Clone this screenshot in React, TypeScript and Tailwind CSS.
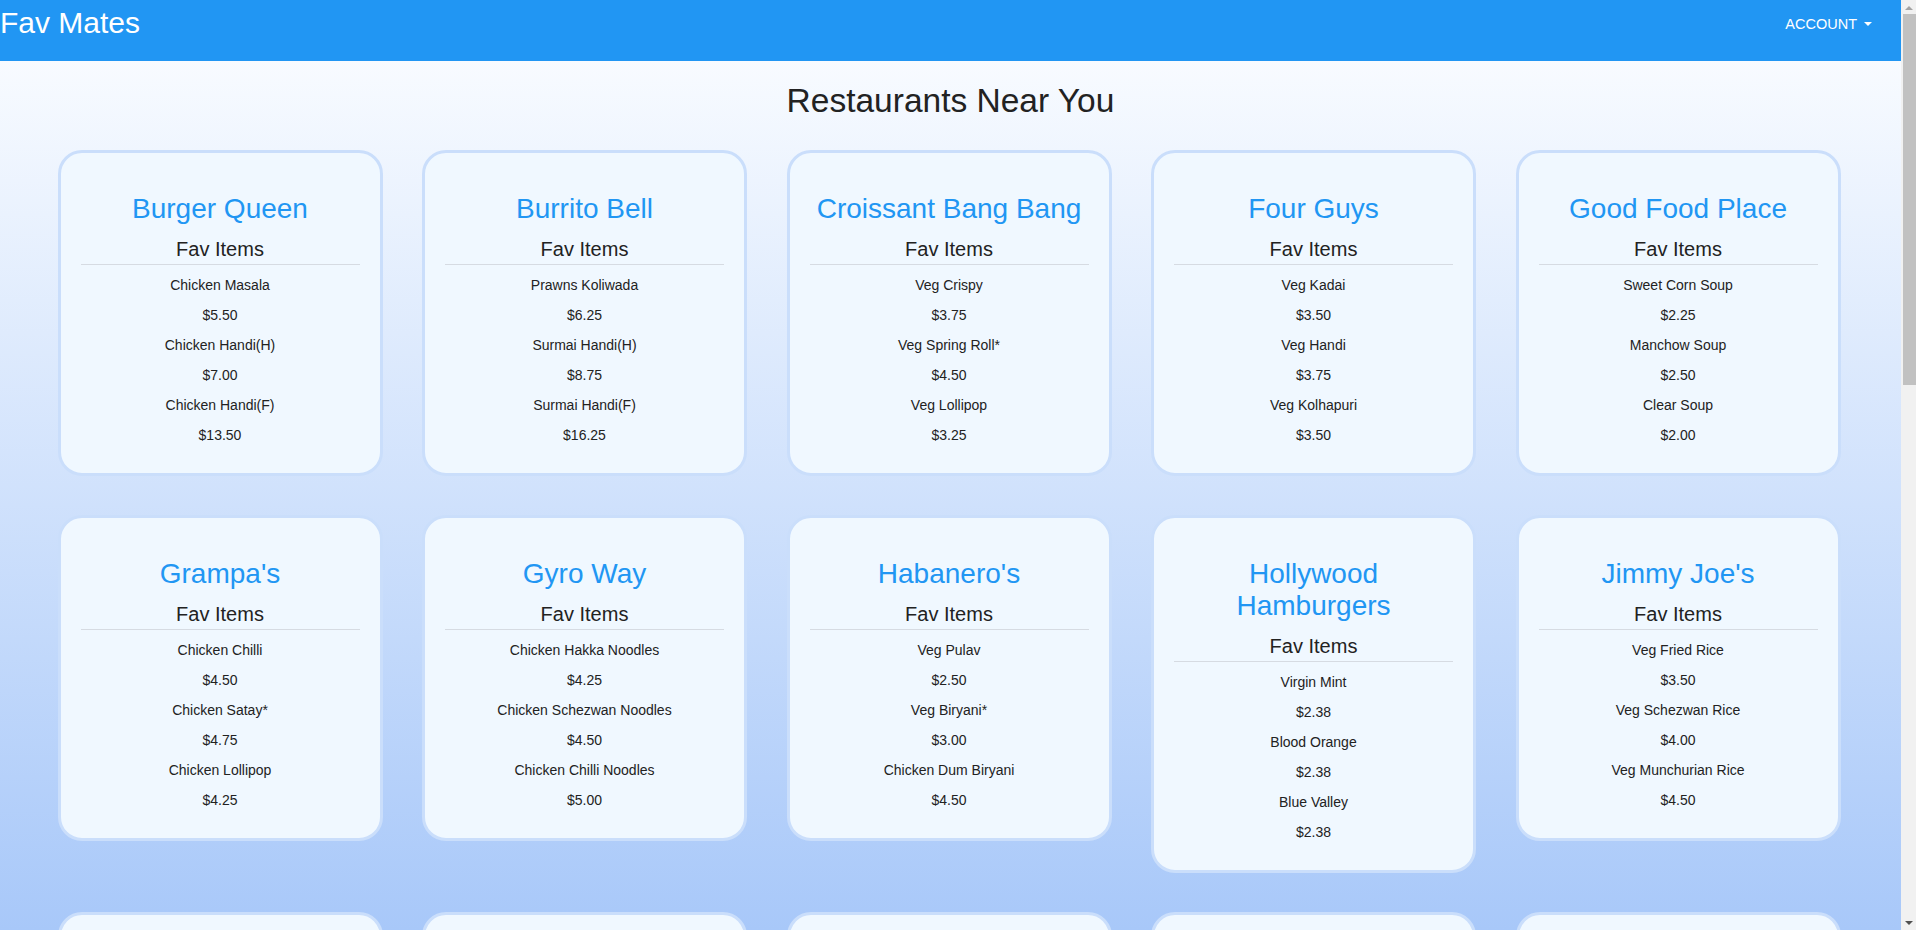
type FavItem = { name: string; price: string }
type Restaurant = { name: string; items: FavItem[] }

const RESTAURANTS: Restaurant[] = [
  { name: 'Burger Queen', items: [
    { name: 'Chicken Masala', price: '$5.50' },
    { name: 'Chicken Handi(H)', price: '$7.00' },
    { name: 'Chicken Handi(F)', price: '$13.50' },
  ] },
  { name: 'Burrito Bell', items: [
    { name: 'Prawns Koliwada', price: '$6.25' },
    { name: 'Surmai Handi(H)', price: '$8.75' },
    { name: 'Surmai Handi(F)', price: '$16.25' },
  ] },
  { name: 'Croissant Bang Bang', items: [
    { name: 'Veg Crispy', price: '$3.75' },
    { name: 'Veg Spring Roll*', price: '$4.50' },
    { name: 'Veg Lollipop', price: '$3.25' },
  ] },
  { name: 'Four Guys', items: [
    { name: 'Veg Kadai', price: '$3.50' },
    { name: 'Veg Handi', price: '$3.75' },
    { name: 'Veg Kolhapuri', price: '$3.50' },
  ] },
  { name: 'Good Food Place', items: [
    { name: 'Sweet Corn Soup', price: '$2.25' },
    { name: 'Manchow Soup', price: '$2.50' },
    { name: 'Clear Soup', price: '$2.00' },
  ] },
  { name: "Grampa's", items: [
    { name: 'Chicken Chilli', price: '$4.50' },
    { name: 'Chicken Satay*', price: '$4.75' },
    { name: 'Chicken Lollipop', price: '$4.25' },
  ] },
  { name: 'Gyro Way', items: [
    { name: 'Chicken Hakka Noodles', price: '$4.25' },
    { name: 'Chicken Schezwan Noodles', price: '$4.50' },
    { name: 'Chicken Chilli Noodles', price: '$5.00' },
  ] },
  { name: "Habanero's", items: [
    { name: 'Veg Pulav', price: '$2.50' },
    { name: 'Veg Biryani*', price: '$3.00' },
    { name: 'Chicken Dum Biryani', price: '$4.50' },
  ] },
  { name: 'Hollywood Hamburgers', items: [
    { name: 'Virgin Mint', price: '$2.38' },
    { name: 'Blood Orange', price: '$2.38' },
    { name: 'Blue Valley', price: '$2.38' },
  ] },
  { name: "Jimmy Joe's", items: [
    { name: 'Veg Fried Rice', price: '$3.50' },
    { name: 'Veg Schezwan Rice', price: '$4.00' },
    { name: 'Veg Munchurian Rice', price: '$4.50' },
  ] },
  { name: 'Kebab Korner', items: [
    { name: 'Paneer Tikka', price: '$4.00' },
    { name: 'Chicken Seekh', price: '$4.75' },
    { name: 'Mutton Seekh', price: '$5.50' },
  ] },
  { name: 'Lucky Noodle', items: [
    { name: 'Veg Chowmein', price: '$3.25' },
    { name: 'Egg Noodles', price: '$3.50' },
    { name: 'Chicken Noodles', price: '$4.00' },
  ] },
  { name: 'Mama Mia', items: [
    { name: 'Margherita', price: '$5.00' },
    { name: 'Veg Supreme', price: '$6.25' },
    { name: 'Pepperoni', price: '$6.75' },
  ] },
  { name: 'Nacho Nation', items: [
    { name: 'Cheese Nachos', price: '$3.00' },
    { name: 'Bean Burrito', price: '$4.25' },
    { name: 'Chicken Taco', price: '$3.75' },
  ] },
  { name: 'Om Sweets', items: [
    { name: 'Gulab Jamun', price: '$1.50' },
    { name: 'Rasmalai', price: '$2.25' },
    { name: 'Kaju Katli', price: '$3.00' },
  ] },
]

function RestaurantCard({ r }: { r: Restaurant }) {
  return (
    <div className="w-[325px] rounded-[24px] border-[3px] border-[#cadefb] bg-[#f0f8ff] px-5 pt-[40px] pb-[23px] text-center">
      <h2 className="text-[28px] leading-[32px] text-[#2196f3]">{r.name}</h2>
      <h3 className="mt-3 text-[20px] leading-[24px] text-[#222]">Fav Items</h3>
      <hr className="mt-[3px] border-0 border-t border-[#d6dbe2]" />
      <div className="mt-[5px] text-[14px] leading-[30px] text-[#222]">
        {r.items.map(item => (
          <div key={item.name}>
            <div>{item.name}</div>
            <div>{item.price}</div>
          </div>
        ))}
      </div>
    </div>
  )
}

function Scrollbar() {
  return (
    <div className="flex w-[15px] flex-col bg-[#f1f1f1]">
      <div className="flex h-[14px] items-center justify-center">
        <svg width="8" height="5" viewBox="0 0 8 5"><path d="M0 5 L4 1 L8 5 Z" fill="#a3a3a3" /></svg>
      </div>
      <div className="ml-[2px] h-[371px] bg-[#c1c1c1]" />
      <div className="flex-1" />
      <div className="flex h-[14px] items-center justify-center">
        <svg width="8" height="5" viewBox="0 0 8 5"><path d="M0 0 L4 4 L8 0 Z" fill="#505050" /></svg>
      </div>
    </div>
  )
}

export default function App() {
  return (
    <div className="flex h-[930px] overflow-hidden font-['Liberation_Sans',Arial,sans-serif]">
      <div className="flex min-w-0 flex-1 flex-col overflow-hidden">
        {/* Navbar */}
        <nav className="flex h-[61px] shrink-0 items-start justify-between bg-[#2196f3] text-white">
          <span className="pt-[6px] text-[30px] leading-[34px]">Fav Mates</span>
          <button className="mr-[29px] flex items-center gap-[7px] pt-[14px] text-[14.5px] leading-[20px]">
            ACCOUNT
            <svg width="8" height="4" viewBox="0 0 8 4"><path d="M0 0 L8 0 L4 4 Z" fill="#fff" /></svg>
          </button>
        </nav>

        {/* Content */}
        <main className="min-h-0 flex-1 overflow-hidden bg-[linear-gradient(to_bottom,#f8fbff,#a8c8f9)] pt-[20px]">
          <h1 className="mb-[29px] text-center text-[33.5px] leading-[40px] text-[#222]">Restaurants Near You</h1>
          <div className="flex flex-wrap items-start justify-center gap-x-[39.5px] gap-y-[39px] pr-[3px]">
            {RESTAURANTS.map(r => <RestaurantCard key={r.name} r={r} />)}
          </div>
        </main>
      </div>
      <Scrollbar />
    </div>
  )
}
